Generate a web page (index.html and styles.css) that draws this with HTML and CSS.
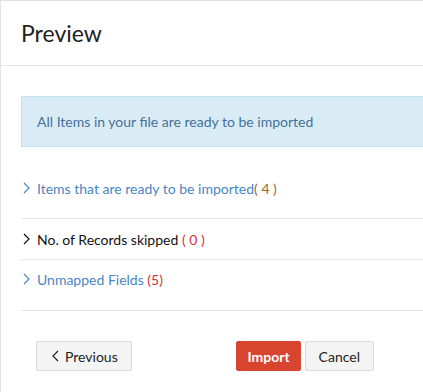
FILE: index.html
```html
<!DOCTYPE html>
<html lang="en">
  <head>
    <meta charset="UTF-8" />
    <meta name="viewport" content="width=device-width, initial-scale=1.0" />
    <title>Preview</title>
    <link rel="stylesheet" href="styles.css">
  </head>
  <body>
    <div class="panel">
      <header class="panel-head">
        <h1>Preview</h1>
      </header>

      <div class="panel-body">
        <div class="notice">All Items in your file are ready to be imported</div>

        <div class="summary">
          <div class="row row-tall row-link">
            <svg class="caret" width="7" height="12" viewBox="0 0 7 12"><path d="M1 1l5 5-5 5" fill="none" stroke="currentColor" stroke-width="1.2"/></svg>
            <span>Items that are ready to be imported<span class="count ok">( 4 )</span></span>
          </div>
          <div class="row">
            <svg class="caret" width="7" height="12" viewBox="0 0 7 12"><path d="M1 1l5 5-5 5" fill="none" stroke="currentColor" stroke-width="1.2"/></svg>
            <span>No. of Records skipped <span class="count bad">( 0 )</span></span>
          </div>
          <div class="row row-tall row-link">
            <svg class="caret" width="7" height="12" viewBox="0 0 7 12"><path d="M1 1l5 5-5 5" fill="none" stroke="currentColor" stroke-width="1.2"/></svg>
            <span>Unmapped Fields <span class="count bad">(5)</span></span>
          </div>
        </div>

        <div class="actions">
          <button class="btn btn-back">
            <svg width="7" height="12" viewBox="0 0 7 12"><path d="M6 1L1 6l5 5" fill="none" stroke="currentColor" stroke-width="1.2"/></svg>
            Previous
          </button>
          <div class="actions-right">
            <button class="btn btn-primary">Import</button>
            <button class="btn">Cancel</button>
          </div>
        </div>
      </div>
    </div>
  </body>
</html>
```

FILE: styles.css
```css
* {
  box-sizing: border-box;
}

body {
  margin: 0;
  font-family: Lato, "Open Sans", sans-serif;
  color: #222;
  background-color: #fff;
}

.panel {
  border-left: 1px solid #e2e2e2;
  border-top: 1px solid #e2e2e2;
  min-height: 392px;
}

.panel-head {
  height: 65px;
  border-bottom: 1px solid #e6e6e6;
  display: flex;
  align-items: center;
  padding-left: 20px;
}

.panel-head h1 {
  margin: 0;
  font-size: 23px;
  font-weight: normal;
  color: #222;
}

.panel-body {
  padding: 30px 0 0 20px;
}

.notice {
  background-color: #d9ecf5;
  border: 1px solid #bfe3f0;
  border-right: none;
  color: #45709a;
  font-size: 14px;
  height: 51px;
  display: flex;
  align-items: center;
  padding-left: 15px;
}

.summary {
  margin-top: 21px;
}

.row {
  display: flex;
  align-items: center;
  gap: 7px;
  height: 41px;
  padding-left: 2px;
  border-bottom: 1px solid #e6e6e6;
  font-size: 14px;
  color: #111;
}

.row-tall {
  height: 51px;
  padding-bottom: 10px;
}

.row-tall:last-child {
  padding-bottom: 12px;
}

.row-link {
  color: #4a86c5;
}

.count.ok {
  color: #9a6a2c;
}

.count.bad {
  color: #d2343c;
}

.actions {
  display: flex;
  padding: 30px 0 0 15px;
  width: 353px;
  justify-content: space-between;
}

.actions-right {
  display: flex;
  gap: 4px;
}

.btn {
  font-family: inherit;
  font-size: 14px;
  height: 30px;
  padding: 0 13px;
  background-color: #f4f4f4;
  border: 1px solid #dadada;
  border-radius: 2px;
  color: #222;
  cursor: pointer;
}

.btn-back {
  display: flex;
  align-items: center;
  gap: 6px;
  padding: 0 13px 0 15px;
}

.btn-primary {
  background-color: #d8452f;
  border-color: #d8452f;
  color: #fff;
  font-weight: bold;
  padding: 0 10px;
}
```
